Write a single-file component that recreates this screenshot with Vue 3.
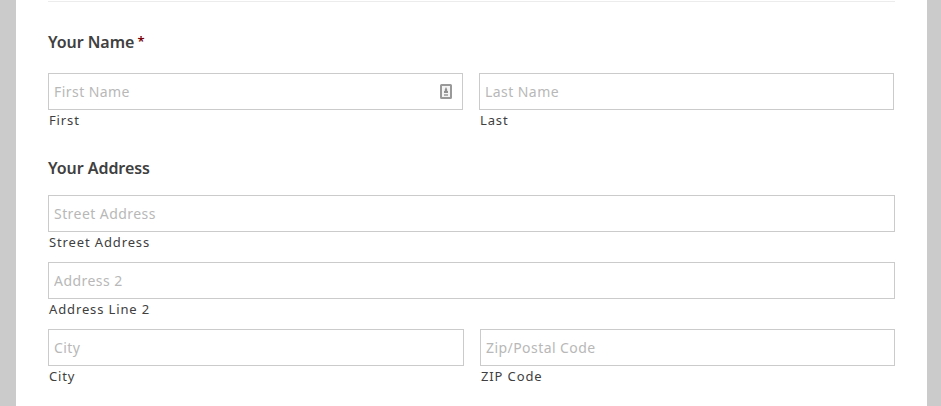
<template>
  <div class="page">
    <form class="form-card" @submit.prevent>
      <hr class="divider" />

      <section class="name-group">
        <h3 class="group-label">Your Name <span class="required">*</span></h3>
        <div class="row name-row">
          <div class="field">
            <div class="input-wrap">
              <input id="first" v-model="form.first" type="text" placeholder="First Name" />
              <svg class="contact-icon" width="12" height="16" viewBox="0 0 12 16">
                <rect x="1" y="1" width="10" height="13" rx="0.5" fill="#f4f4f4" stroke="#999" stroke-width="2" />
                <path d="M6 3 L7.2 5.5 V7 H8 V9 H4 V7 H4.8 V5.5 Z" fill="#909090" />
                <rect x="4" y="10" width="4" height="2" fill="#b0b0b0" />
              </svg>
            </div>
            <label for="first">First</label>
          </div>
          <div class="field">
            <input id="last" v-model="form.last" type="text" placeholder="Last Name" />
            <label for="last">Last</label>
          </div>
        </div>
      </section>

      <section class="address-group">
        <h3 class="group-label address-label">Your Address</h3>
        <div class="field">
          <input id="street" v-model="form.street" type="text" placeholder="Street Address" />
          <label for="street">Street Address</label>
        </div>
        <div class="field">
          <input id="address2" v-model="form.address2" type="text" placeholder="Address 2" />
          <label for="address2">Address Line 2</label>
        </div>
        <div class="row city-row">
          <div class="field">
            <input id="city" v-model="form.city" type="text" placeholder="City" />
            <label for="city">City</label>
          </div>
          <div class="field">
            <input id="zip" v-model="form.zip" type="text" placeholder="Zip/Postal Code" />
            <label for="zip">ZIP Code</label>
          </div>
        </div>
      </section>
    </form>
  </div>
</template>

<script setup>
import { reactive } from "vue";

const form = reactive({
  first: "",
  last: "",
  street: "",
  address2: "",
  city: "",
  zip: "",
});
</script>

<style>
body {
  margin: 0;
  overflow: hidden;
}
</style>

<style scoped>
.page {
  height: 406px;
  padding: 0 14px 0 16px;
  box-sizing: border-box;
  background: #cbcbcb;
  font-family: "Noto Sans", "Open Sans", sans-serif;
}

.form-card {
  height: 100%;
  padding: 1px 32px 0;
  box-sizing: border-box;
  background: #fff;
}

.divider {
  height: 1px;
  margin: 0;
  border: 0;
  background: #ececec;
}

.name-group {
  padding-top: 30px;
}

.group-label {
  height: 22px;
  margin: 0 0 19px;
  color: #404040;
  font-size: 16px;
  font-weight: 600;
  line-height: 21px;
  letter-spacing: -0.06px;
}

.address-label {
  margin-bottom: 15px;
}

.required {
  margin-left: -1px;
  color: #790000;
  font-size: 13px;
  line-height: 1;
  vertical-align: 2px;
}

.address-group {
  padding-top: 18px;
}

.row {
  display: grid;
  gap: 16px;
}

.name-row {
  grid-template-columns: 415px 415px;
}

.city-row {
  grid-template-columns: 416px 415px;
}

.field {
  height: 67px;
}

.input-wrap {
  position: relative;
}

input {
  display: block;
  width: 100%;
  height: 37px;
  padding: 0 5px 1px;
  box-sizing: border-box;
  border: 1px solid #cbcbcb;
  border-radius: 0;
  outline: none;
  background: #fff;
  color: #404040;
  font-family: inherit;
  font-size: 14px;
  letter-spacing: 0.44px;
}

input::placeholder {
  color: #b8b8b8;
  opacity: 1;
}

.contact-icon {
  position: absolute;
  top: 11px;
  right: 11px;
}

label {
  display: block;
  padding-left: 1px;
  color: #404040;
  font-size: 13px;
  line-height: 20px;
  letter-spacing: 0.87px;
}
</style>
